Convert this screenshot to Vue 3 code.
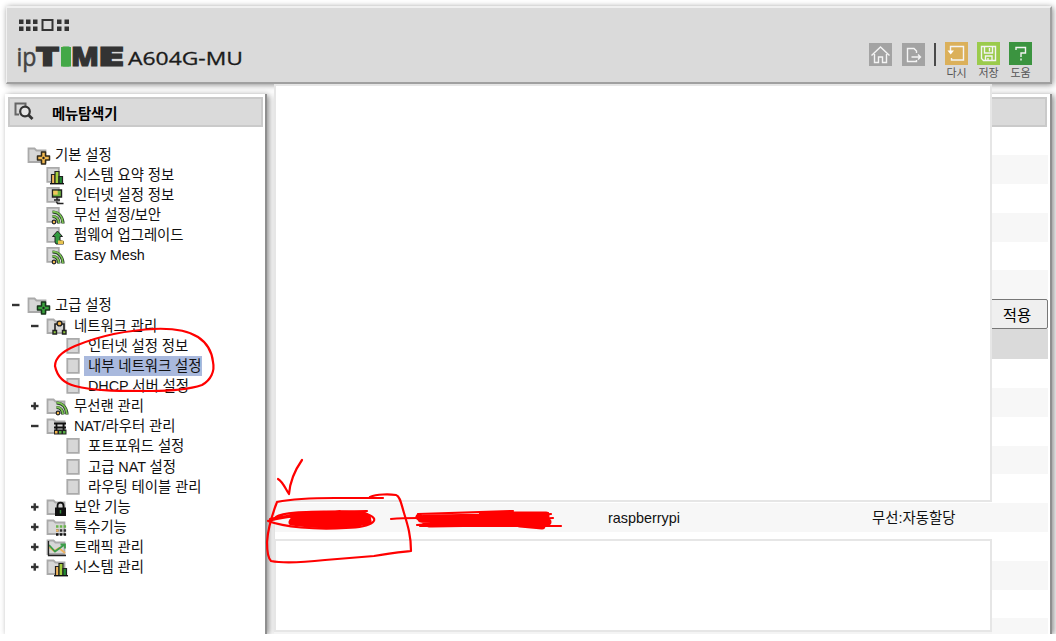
<template>
  <div class="page">
    <header class="top">
      <svg class="logo" width="240" height="70" viewBox="0 0 240 70">
        <g fill="#333">
          <rect v-for="d in dots" :key="d.join()" :x="d[0]" :y="d[1]" width="4.5" height="4.5" />
        </g>
        <rect x="35.500" y="12" width="10" height="10" fill="none" stroke="#333" stroke-width="2" />
        <text x="9.500" y="57.500" class="logo-ip" textLength="20" lengthAdjust="spacingAndGlyphs">ip</text>
        <text x="28.500" y="58" class="logo-time" textLength="24" lengthAdjust="spacingAndGlyphs">T</text>
        <rect x="54" y="39" width="10" height="19.500" fill="#43a847" />
        <text x="54" y="58" class="logo-time green" textLength="10" lengthAdjust="spacingAndGlyphs">I</text>
        <text x="64" y="58" class="logo-time" textLength="28" lengthAdjust="spacingAndGlyphs">M</text>
        <text x="90.500" y="58" class="logo-time" textLength="27" lengthAdjust="spacingAndGlyphs">E</text>
        <text x="121" y="57.200" class="logo-model" textLength="115" lengthAdjust="spacingAndGlyphs">A604G-MU</text>
      </svg>

      <nav class="tools">
        <div class="tool gray">
          <svg width="23" height="23" viewBox="0 0 23 23">
            <path d="M2.500 12.500 11.500 4l9 8.500M5.500 11v8.500h4V14h4v5.500h4V11" />
          </svg>
        </div>
        <div class="tool gray">
          <svg width="23" height="23" viewBox="0 0 23 23">
            <path d="M14.500 10V8l-2.500-2.500H5.500v13h9V17M9.500 14h9M16 11.500l2.500 2.500-2.500 2.500" />
          </svg>
        </div>
        <i class="bar"></i>
        <div class="tool orange">
          <svg width="23" height="23" viewBox="0 0 23 23">
            <path d="M5.500 9V4.500H18.500v13.500H6.500V16" />
            <path d="M2.500 8.500h6.500L5.700 12.500z" class="solid" />
          </svg>
          <span>다시</span>
        </div>
        <div class="tool lime">
          <svg width="23" height="23" viewBox="0 0 23 23">
            <path d="M4.500 4.500h14v14H6.500l-2-2zM7.500 4.500v6.500h8V4.500M12.500 6v3.500M8.500 18.500v-4.500h6.500v4.500M11 16v2.500" />
          </svg>
          <span>저장</span>
        </div>
        <div class="tool green">
          <svg width="23" height="23" viewBox="0 0 23 23">
            <path d="M7 8V5.500h9.500V11H12v4M12 16.500v2" />
          </svg>
          <span>도움</span>
        </div>
      </nav>
    </header>

    <div class="columns">
      <aside class="side">
        <h1 class="side-title">
          <svg width="22" height="20" viewBox="0 0 22 20">
            <path d="M5 12.500H1.500V1.500h10V4" fill="none" stroke="#666" stroke-width="2" />
            <circle cx="11" cy="9.500" r="4.800" fill="#e6e6e6" stroke="#333" stroke-width="2.200" />
            <path d="m14.500 13 4 4" stroke="#333" stroke-width="2.800" />
          </svg>
          <span>메뉴탐색기</span>
        </h1>

        <ul class="tree">
          <li
            v-for="item in menu"
            :key="item.id"
            :class="['row', `level-${item.level}`, { selected: item.selected, spaced: item.spaced }]"
          >
            <svg class="toggle" width="8" height="8" viewBox="0 0 8 8">
              <path v-if="item.toggle" d="M0 4h7.500" />
              <path v-if="item.toggle === '+'" d="M3.750 .3v7.400" />
            </svg>
            <svg class="icon" width="24" height="20" viewBox="0 0 24 20">
              <use :href="`#${item.base}`" />
              <use v-if="item.badge" :href="`#${item.badge}`" :x="item.base === 'folder' ? 4 : 0" />
            </svg>
            <span class="label">{{ item.text }}</span>
          </li>
        </ul>
      </aside>

      <main class="main">
        <div class="main-title"></div>
        <div v-for="n in 6" :key="`a${n}`" class="stripe"></div>
        <div class="actions"><button type="button">적용</button></div>
        <div class="table-head"></div>
        <div v-for="n in 10" :key="`b${n}`" class="stripe">
          <template v-if="n === 6">
            <span class="host">raspberrypi</span>
            <span class="kind">무선:자동할당</span>
          </template>
        </div>
      </main>
    </div>

    <div class="cover cover-top"></div>
    <div class="cover cover-middle"></div>
    <div class="cover cover-bottom"></div>

    <!-- Marcas vermelhas feitas à mão -->
    <svg class="marks" width="1056" height="641" viewBox="0 0 1056 641">
      <path d="M156 329C128 330 99 336 75 346C61 352 55 358 55 366C57 376 63 383 75 386C93 391 119 391 151 391C173 391 190 389 202 385C211 380 215 371 213 362C212 352 207 343 198 337C187 330 171 328 152 329" />
      <path d="M278 479C283 482 285 488 289 494C290 481 295 470 302 460" />
      <path d="M383 498H335C315 498 292 499 277 502C272 515 268 527 267 542C267 551 268 558 271 561C285 564 307 562 325 560L374 556C389 553 401 552 411 551C411 536 408 526 404 513C401 503 400 496 396 495C389 494 377 494 370 497" />
      <path d="M276 517C284 511 310 512 367 511M268 521C290 515 330 512 364 513C384 519 373 527 346 528C314 530 284 527 268 521M270 519C290 514 320 514 340 511" />
      <path class="thick" d="M293 516C319 514 344 514 363 515C375 520 363 524 338 525C320 525 305 524 292 522C323 519 350 517 368 521C370 523 340 523 300 519" />
      <path d="M391 519C402 518 410 518 418 518M418 514L512 511M423 516L548 513M417 525L551 514M420 526L553 518M424 526H561M513 511L480 514" />
      <path class="thick" d="M419 517L429 524L546 516L421 519L548 522L432 524M500 515H546M520 524L542 526" />
    </svg>

    <svg class="sprite" width="0" height="0">
      <symbol id="folder" viewBox="0 0 24 20" width="24" height="20">
        <path d="M1.500 3.500h6l2 2H18.500v11.500H1.500z" fill="#d7d7d7" stroke="#aaa" stroke-width="1.800" />
      </symbol>
      <symbol id="doc" viewBox="0 0 24 20" width="24" height="20">
        <path d="M1.300 2.800h11.500v14H1.300z" fill="#d7d7d7" stroke="#aaa" stroke-width="1.800" />
      </symbol>
      <symbol id="cross-yellow" viewBox="0 0 24 20" width="24" height="20">
        <path d="M10.500 7h4v4h4v4h-4v4h-4v-4h-4v-4h4z" fill="#f3ba50" stroke="#302a1c" stroke-width="1.500" stroke-linejoin="round" />
        <circle cx="12.500" cy="13" r="1.200" fill="#222" />
      </symbol>
      <symbol id="cross-green" viewBox="0 0 24 20" width="24" height="20">
        <path d="M10.500 7h4v4h4v4h-4v4h-4v-4h-4v-4h4z" fill="#39a33c" stroke="#17331a" stroke-width="1.500" stroke-linejoin="round" />
        <circle cx="12.500" cy="13" r="1.200" fill="#222" />
      </symbol>
      <symbol id="bars" viewBox="0 0 24 20" width="24" height="20">
        <g stroke="#222" stroke-width="1.200">
          <path d="M5.500 9.500H9v9H5.500z" fill="#f2b65c" />
          <path d="M9 6.500h4v12H9z" fill="#a4cf3d" />
          <path d="M13 11.500h3.500v7H13z" fill="#218a34" />
        </g>
        <path d="M4 18.700h14" stroke="#111" stroke-width="1.400" />
      </symbol>
      <symbol id="monitor" viewBox="0 0 24 20" width="24" height="20">
        <path d="M6.500 5h9v7h-9z" fill="#6fb53f" stroke="#222" stroke-width="1.400" />
        <path d="M7.200 5.700h4.500v4H7.200z" fill="#f2c75c" />
        <path d="M11 12v2.500M8 15h6M17.500 18.500h-6l-1-2" fill="none" stroke="#222" stroke-width="1.500" />
      </symbol>
      <symbol id="wifi" viewBox="0 0 24 20" width="24" height="20">
        <path d="M6.500 7c6 0 10 4.500 10.500 11.500M6.500 11.500c3.500 0 6 2.500 6.500 7" fill="none" stroke="#26382a" stroke-width="3.200" />
        <path d="M6.500 6.700c6 0 10 4.500 10.500 11.500M6.500 11.200c3.500 0 6 2.500 6.500 7" fill="none" stroke="#7cc452" stroke-width="1.800" />
        <circle cx="8" cy="17" r="1.800" fill="#f3ba50" stroke="#222" stroke-width="1.200" />
      </symbol>
      <symbol id="upload" viewBox="0 0 24 20" width="24" height="20">
        <path d="m11.500 6 5 5.500H14v4l3.500 1V19H10l-1-2v-5.500H6.500z" fill="#319a3e" stroke="#222" />
        <path d="M12 15.500h5.500V19H12z" fill="#e7c24f" />
      </symbol>
      <symbol id="nodes" viewBox="0 0 24 20" width="24" height="20">
        <path d="M8 8H5v7M11 8h3v7" fill="none" stroke="#222" stroke-width="1.600" />
        <circle cx="9.500" cy="7.500" r="2.400" fill="#f0b24c" stroke="#222" stroke-width="1.400" />
        <path d="M3 14.500h3.500V18H3zM12.500 14.500H16V18h-3.500z" fill="#8bc53e" stroke="#222" stroke-width="1.400" />
      </symbol>
      <symbol id="router" viewBox="0 0 24 20" width="24" height="20">
        <path d="M4 7.500h12M4 11.500h12M6.500 8v6M13.500 8v6" stroke="#111" stroke-width="1.800" />
        <path d="M4 13.500h12.500v5H4z" fill="#222" />
        <path d="M5 15h2.500v2.500H5z" fill="#f0b24c" />
        <path d="M9 15h2.500v2.500H9zM13 15h2.500v2.500H13z" fill="#56ad45" />
      </symbol>
      <symbol id="lock" viewBox="0 0 24 20" width="24" height="20">
        <path d="M7.500 11V9c0-4.500 6-4.500 6 0v2" fill="none" stroke="#111" stroke-width="1.800" />
        <path d="M5 10.500h11V19H5z" fill="#111" />
        <path d="M10.500 13v3.500" stroke="#348c3f" stroke-width="1.500" />
      </symbol>
      <symbol id="grid" viewBox="0 0 24 20" width="24" height="20">
        <g stroke-width="2.500" stroke-dasharray="2.500 1.300">
          <path d="M6 9.500h11" stroke="#69b54c" />
          <path d="M6 13.500h11" stroke="#333" />
          <path d="M6 17.500h11" stroke="#111" />
        </g>
        <path d="M6 12.300h2.500v2.500H6z" fill="#f0b96c" />
      </symbol>
      <symbol id="traffic" viewBox="0 0 24 20" width="24" height="20" overflow="visible">
        <path d="m-1 10 5 4 5-3 6 5" fill="none" stroke="#efb15c" stroke-width="1.800" />
        <path d="m-1 8 6 6.500L14 8M10.500 7.500h4.500v4" fill="none" stroke="#3c9d49" stroke-width="1.800" />
        <path d="M-1.500 4v14.500H16" fill="none" stroke="#222" stroke-width="1.300" />
      </symbol>
    </svg>
  </div>
</template>

<script setup>
// Pontinhos acima do logotipo: [x, y]
const dots = [12, 19, 26, 50, 57.500].flatMap((x) => [[x, 11.500], [x, 18.500]]);

const menu = [
  { level: 1, text: '기본 설정', base: 'folder', badge: 'cross-yellow' },
  { level: 2, text: '시스템 요약 정보', base: 'doc', badge: 'bars' },
  { level: 2, text: '인터넷 설정 정보', base: 'doc', badge: 'monitor' },
  { level: 2, text: '무선 설정/보안', base: 'doc', badge: 'wifi' },
  { level: 2, text: '펌웨어 업그레이드', base: 'doc', badge: 'upload' },
  { level: 2, text: 'Easy Mesh', base: 'doc', badge: 'wifi' },
  { level: 1, text: '고급 설정', base: 'folder', badge: 'cross-green', toggle: '-', spaced: true },
  { level: 2, text: '네트워크 관리', base: 'folder', badge: 'nodes', toggle: '-' },
  { level: 3, text: '인터넷 설정 정보', base: 'doc' },
  { level: 3, text: '내부 네트워크 설정', base: 'doc', selected: true },
  { level: 3, text: 'DHCP 서버 설정', base: 'doc' },
  { level: 2, text: '무선랜 관리', base: 'folder', badge: 'wifi', toggle: '+' },
  { level: 2, text: 'NAT/라우터 관리', base: 'folder', badge: 'router', toggle: '-' },
  { level: 3, text: '포트포워드 설정', base: 'doc' },
  { level: 3, text: '고급 NAT 설정', base: 'doc' },
  { level: 3, text: '라우팅 테이블 관리', base: 'doc' },
  { level: 2, text: '보안 기능', base: 'folder', badge: 'lock', toggle: '+' },
  { level: 2, text: '특수기능', base: 'folder', badge: 'grid', toggle: '+' },
  { level: 2, text: '트래픽 관리', base: 'folder', badge: 'traffic', toggle: '+' },
  { level: 2, text: '시스템 관리', base: 'folder', badge: 'bars', toggle: '+' }
].map((item, id) => ({ id, ...item }));
</script>

<style>
body {
  background: #ffffff;
  overflow: hidden;
}
</style>

<style scoped>
.page {
  position: relative;
  display: flex;
  flex-direction: column;
  gap: 10px;
  box-sizing: border-box;
  width: 1056px;
  height: 634px;
  padding: 6px 4px 0 5px;
  overflow: hidden;
  font-family: "Liberation Sans", "Noto Sans CJK KR", sans-serif;
  font-size: 14.4px;
  color: #111;
}

.top {
  display: flex;
  justify-content: space-between;
  flex: none;
  box-sizing: border-box;
  height: 78px;
  margin-left: 1px;
  padding-right: 18px;
  background: #dadada;
  border: 2px solid #a0a0a0;
  border-top-color: #f0f0f0;
  border-left: 1px solid #f0f0f0;
  box-shadow: 1px 1px 6px rgba(0, 0, 0, 0.45);
}

.logo {
  overflow: visible;
}

.logo-ip {
  font: 25px "Open Sans", sans-serif;
  fill: #444;
  stroke: #444;
  stroke-width: 0.5;
}

.logo-time {
  font: 800 26px "Open Sans", sans-serif;
  fill: #333;
  stroke: #333;
  stroke-width: 1;
}

.logo-time.green {
  fill: #43a847;
  stroke: #43a847;
}

.logo-model {
  font: 17.5px "Open Sans", sans-serif;
  fill: #1c1c1c;
  stroke: #1c1c1c;
  stroke-width: 0.3;
}

.tools {
  display: flex;
  align-items: flex-start;
  gap: 9px;
  padding-top: 34px;
}

.tool {
  display: flex;
  flex-direction: column;
  align-items: center;
  width: 23px;
}

.tool svg {
  flex: none;
  fill: none;
  stroke: #f4f4f4;
  stroke-width: 1.4;
}

.tool .solid {
  fill: #fff;
  stroke: none;
}

.tool span {
  margin-top: 1px;
  font-size: 11px;
  line-height: 14px;
  white-space: nowrap;
  color: #555;
}

.gray {
  margin-top: 1px;
}

.gray + .gray {
  margin-left: 1px;
}

.gray svg { background: #a3a3a3; }
.orange svg { background: #dbb05a; }
.lime svg { background: #9bcb4c; }
.green svg { background: #3b9440; }

.bar {
  width: 2px;
  height: 23px;
  margin-top: 1px;
  background: #4a4a4a;
}

.columns {
  display: flex;
  gap: 8px;
  flex: 1;
  min-height: 0;
}

.side,
.main {
  box-sizing: border-box;
  background: #fff;
  border-right: 2px solid #8f8f8f;
  box-shadow: 2px 1px 6px rgba(0, 0, 0, 0.45);
}

.side {
  width: 262px;
  padding: 3px 2px 0 3px;
}

.side-title {
  display: flex;
  align-items: center;
  gap: 16px;
  box-sizing: border-box;
  height: 30px;
  margin: 0;
  padding-left: 4px;
  border: 2px solid #cacaca;
  background: #dadada;
  font-size: 14.4px;
  font-weight: 700;
  letter-spacing: -0.2px;
  color: #000;
}

.tree {
  margin: 17.5px 0 0;
  padding: 0;
  list-style: none;
}

.row {
  display: flex;
  align-items: center;
  height: 20.15px;
  line-height: 20px;
  white-space: nowrap;
}

.row.spaced {
  margin-top: 30px;
}

.level-1 { padding-left: 4px; }
.level-2 { padding-left: 23px; }
.level-3 { padding-left: 43px; }

.toggle {
  flex: none;
  margin-right: 7px;
  stroke: #333;
  stroke-width: 2.4;
}

.icon {
  flex: none;
  overflow: visible;
}

.label {
  height: 20px;
  padding: 0 1px 0 4px;
  letter-spacing: -0.05px;
}

.level-3 .label {
  margin-left: -6px;
}

.selected .label {
  background: #a9b9dd;
}

.main {
  flex: 1;
  padding: 3px 2px 0 0;
}

.main-title {
  box-sizing: border-box;
  height: 29.5px;
  margin-right: 1px;
  border: 2px solid #cacaca;
  background: #dadada;
}

.stripe {
  display: flex;
  height: 28.8px;
  line-height: 31px;
}

.stripe:nth-child(odd) {
  background: #f7f7f7;
}

.actions {
  display: flex;
  justify-content: flex-end;
  height: 30px;
}

.actions button {
  width: 62px;
  height: 30px;
  padding: 0;
  border: 1px solid #777;
  border-radius: 2px;
  background: #efefef;
  font: 15.5px "Liberation Sans", "Noto Sans CJK KR", sans-serif;
  color: #000;
}

.table-head {
  height: 30px;
  background: #dadada;
}

.host {
  margin-left: 333px;
  width: 264px;
}

.cover {
  position: absolute;
  left: 274px;
  box-sizing: border-box;
  width: 718px;
  background: #fff;
  border: 2px solid #e6e6e6;
}

.cover-top {
  top: 84px;
  height: 418px;
}

.cover-middle {
  top: 539px;
  height: 93px;
}

.cover-bottom {
  top: 632px;
  left: 274px;
  height: 2px;
  border: 0;
  background: #f4f4f4;
}

.marks {
  position: absolute;
  top: 0;
  left: 0;
  fill: none;
  stroke: #ff0000;
  stroke-width: 2.2;
  stroke-linecap: round;
  stroke-linejoin: round;
}

.marks .thick {
  stroke-width: 7;
}

.sprite {
  position: absolute;
}
</style>
